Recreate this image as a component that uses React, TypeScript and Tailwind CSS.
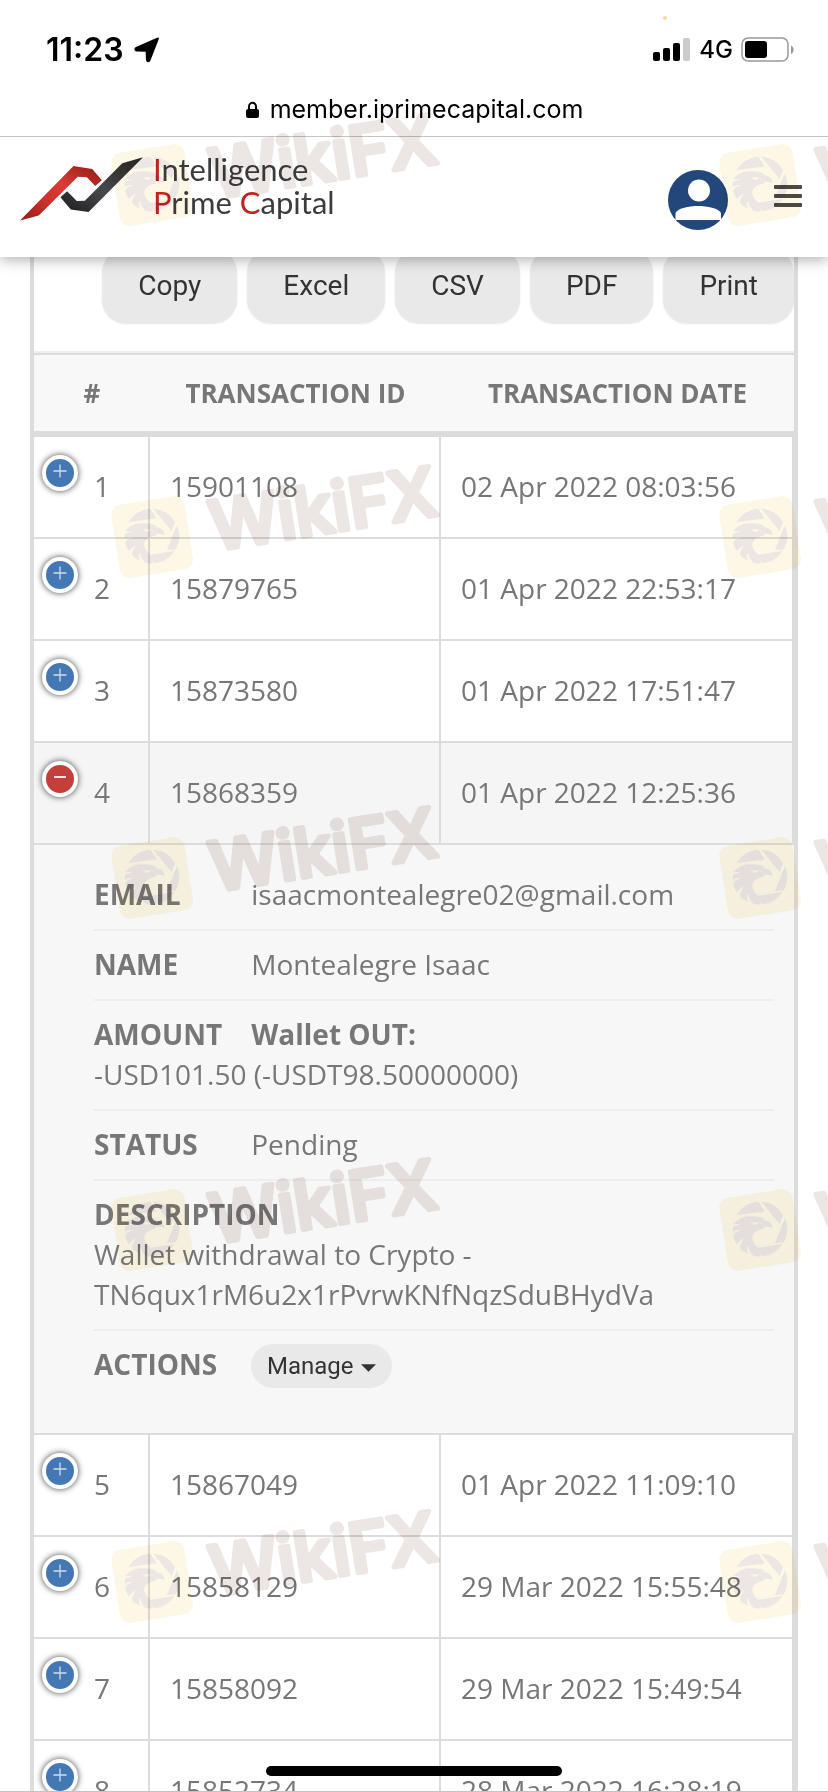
import { Fragment, useState } from "react";

type Transaction = {
  id: string;
  date: string;
};

const transactions: Transaction[] = [
  { id: "15901108", date: "02 Apr 2022 08:03:56" },
  { id: "15879765", date: "01 Apr 2022 22:53:17" },
  { id: "15873580", date: "01 Apr 2022 17:51:47" },
  { id: "15868359", date: "01 Apr 2022 12:25:36" },
  { id: "15867049", date: "01 Apr 2022 11:09:10" },
  { id: "15858129", date: "29 Mar 2022 15:55:48" },
  { id: "15858092", date: "29 Mar 2022 15:49:54" },
  { id: "15852734", date: "28 Mar 2022 16:28:19" },
];

const exportButtons = ["Copy", "Excel", "CSV", "PDF", "Print"];

const StatusBar = () => (
  <div className="flex h-[84px] items-center justify-between pl-[46px] pr-[33px] pt-4 font-['Inter',sans-serif] text-black">
    <div className="flex items-center gap-[10px]">
      <span className="text-[32px] font-semibold">11:23</span>
      <svg width="26" height="26" viewBox="0 0 26 26">
        <path
          d="M24 1.5 15.5 23.2c-.5 1.4-2.4 1.2-2.5-.3L12.6 13.8 2.7 13.4c-1.6-.1-1.8-2-.4-2.6Z"
          stroke="#000"
          strokeWidth="2"
          strokeLinejoin="round"
        />
      </svg>
    </div>
    <div className="flex items-center gap-2">
      <svg width="38" height="24" viewBox="0 0 38 24">
        <rect x="0" y="14" width="7" height="9" rx="2" />
        <rect x="10" y="10" width="7" height="13" rx="2" />
        <rect x="20" y="5" width="7" height="18" rx="2" />
        <rect x="30" y="0" width="7" height="23" rx="2" fill="#cbcbcb" />
      </svg>
      <span className="text-[24px] font-medium">4G</span>
      <svg width="54" height="26" viewBox="0 0 54 26">
        <rect x="1" y="1" width="46" height="23" rx="6" fill="none" stroke="#999" strokeWidth="1.5" />
        <rect x="4" y="4" width="22" height="17" rx="3" />
        <path d="M50 8.5c3.5 1.5 3.5 7 0 8.5Z" fill="#999" />
      </svg>
    </div>
  </div>
);

const AddressBar = () => (
  <div className="relative z-20 flex h-[53px] items-start justify-center gap-[10px] border-b border-[#c4c4c4] bg-white pt-[5px] font-['Inter',sans-serif] text-black">
    <svg width="15" height="18" viewBox="0 0 15 18" className="mt-3">
      <rect x="1" y="8" width="13" height="9" rx="2" />
      <path d="M4 9V5.5a3.5 3.7 0 0 1 7 0V9" fill="none" stroke="#000" strokeWidth="2" />
    </svg>
    <span className="text-[25px] leading-[40px]">member.iprimecapital.com</span>
  </div>
);

const Logo = () => (
  <a href="#" className="flex items-start gap-[10px]">
    <svg width="123" height="64" viewBox="62 472 368 190" className="mt-1">
      <defs>
        <linearGradient id="logoRed" x1="0" y1="1" x2="1" y2="0">
          <stop offset="0" stopColor="#8f1d17" />
          <stop offset="0.3" stopColor="#c9302a" />
          <stop offset="0.6" stopColor="#dc3b33" />
          <stop offset="1" stopColor="#8c1a14" />
        </linearGradient>
        <linearGradient id="logoDark" x1="0" y1="1" x2="1" y2="0">
          <stop offset="0" stopColor="#1d1d1f" />
          <stop offset="0.45" stopColor="#47484c" />
          <stop offset="1" stopColor="#262523" />
        </linearGradient>
      </defs>
      <path d="M62 661 222 498 278 507 307 541 287 558 262 532 235 530 118 646Z" fill="url(#logoRed)" />
      <path d="M183 592 203 574 232 603 256 602 368 490 430 472 267 636 214 628Z" fill="url(#logoDark)" />
    </svg>
    <span className="font-['Lato',sans-serif] text-[31px] leading-[33px] text-[#3c3c3e]">
      <span className="text-[#c0241f]">I</span>ntelligence
      <br />
      <span className="text-[#c0241f]">P</span>rime <span className="text-[#c0241f]">C</span>apital
    </span>
  </a>
);

const Header = () => (
  <header className="relative z-10 flex h-[120px] shrink-0 items-start justify-between bg-white pl-5 pr-[26px] pt-4 shadow-[0_2px_14px_rgba(0,0,0,0.35)]">
    <Logo />
    <div className="flex items-center gap-[46px] pt-[17px]">
      <button aria-label="Account">
        <svg width="60" height="60" viewBox="0 0 60 60">
          <circle cx="30" cy="30" r="30" fill="#22477a" />
          <circle cx="31" cy="20.5" r="11" fill="#fff" />
          <path d="M7.5 50V43c3-5 13-7 22.5-7s20 2 23 7v7Z" fill="#fff" />
        </svg>
      </button>
      <button aria-label="Menu" className="-mt-2">
        <svg width="28" height="24" viewBox="0 0 28 24" fill="#4c4a47">
          <rect y="1" width="28" height="4" rx="1" />
          <rect y="10" width="28" height="4" rx="1" />
          <rect y="19" width="28" height="4" rx="1" />
        </svg>
      </button>
    </div>
  </header>
);

const DetailLabel = ({ children }: { children: string }) => (
  <span className="inline-block min-w-[150px] font-bold">{children}</span>
);

const Details = () => (
  <ul className="ml-[60px] mr-5 divide-y-2 divide-[#eee] pb-[30px] pt-4 leading-[40px] *:pb-[15px] *:pt-[13px]">
    <li>
      <DetailLabel>EMAIL</DetailLabel> isaacmontealegre02@gmail.com
    </li>
    <li>
      <DetailLabel>NAME</DetailLabel> Montealegre Isaac
    </li>
    <li>
      <DetailLabel>AMOUNT</DetailLabel> <b>Wallet OUT:</b>
      <br />
      -USD101.50 (-USDT98.50000000)
    </li>
    <li>
      <DetailLabel>STATUS</DetailLabel> Pending
    </li>
    <li>
      <DetailLabel>DESCRIPTION</DetailLabel>
      <br />
      Wallet withdrawal to Crypto -
      <br />
      TN6qux1rM6u2x1rPvrwKNfNqzSduBHydVa
    </li>
    <li className="flex gap-[7px]">
      <DetailLabel>ACTIONS</DetailLabel>
      <button className="flex h-11 items-center gap-[7px] rounded-full bg-[#e9e9e9] px-4 font-['Roboto',sans-serif] text-2xl text-[#333]">
        Manage
        <svg width="15" height="8" viewBox="0 0 16 8" className="mt-1" fill="#333">
          <path d="M0 0H16L8 8Z" />
        </svg>
      </button>
    </li>
  </ul>
);

const WatermarkUnit = ({ x, y }: { x: number; y: number }) => (
  <g transform={`translate(${x} ${y})`}>
    <rect x="-37" y="-36" width="74" height="74" rx="10" fill="#fdf7e6" transform="rotate(-9)" />
    <g transform="scale(0.333)" fill="#ece6e4">
      <path d="M-70-42A82 82 0 0 1-5-82L14-53Z" />
      <path d="M4-82A82 82 0 0 1 69-42L59-15Z" />
      <path d="M75-32A82 82 0 0 1 72 40L45 42Z" />
      <path d="M-8 57 68 45A82 82 0 0 1 6 82Z" />
      <path d="M-81-14C-76-22-66-30-54-34-42-40-8-40 8-33 12-31 13-29 13-26 30-25 39-14 37-2 30-8 20-6 14-7 10-6 12-2 8 0-8 2-20 10-23 22-25 36-14 48-5 56L3 82C-6 83-14 82-20 80-28 72-34 62-36 48-40 58-40 66-36 74-46 70-54 65-60 58-60 46-54 36-46 28-56 32-64 38-69 46-76 36-80 26-81 18-74 10-66 6-56 4-66 2-74 4-82 8-82 2-82-2-81-6-74-10-66-12-56-12-66-16-74-16-81-14Z" />
      <path d="M-28-22C-22-17-10-22-4-20-8-11-20-10-28-22Z" fill="#fdf7e6" />
    </g>
    <text
      x="59"
      y="24"
      transform="rotate(-9)"
      fontSize="68"
      fontWeight="500"
      fill="#ece6e4"
      stroke="#ece6e4"
      strokeWidth="5"
      strokeLinejoin="round"
      className="font-['Inter',sans-serif]"
    >
      WikiFX
    </text>
  </g>
);

const Watermark = () => (
  <svg aria-hidden="true" className="pointer-events-none absolute inset-0 z-20 h-full w-full mix-blend-multiply">
    {[184, 536, 877, 1229, 1581].map((y) => (
      <Fragment key={y}>
        <WatermarkUnit x={152} y={y} />
        <WatermarkUnit x={760} y={y} />
      </Fragment>
    ))}
  </svg>
);

const App: React.FC = () => {
  const [openRow, setOpenRow] = useState<number | null>(3);

  return (
    <div className="relative flex h-screen flex-col overflow-hidden bg-white">
      <StatusBar />
      <AddressBar />
      <Header />

      <main className="-mt-2 min-h-0 flex-1 overflow-hidden px-[30px]">
        <div className="border-x-4 border-[#dcdcdc] font-['Open_Sans',sans-serif] text-[28px] text-[#777]">
          <div className="flex justify-end gap-[10px] overflow-hidden border-b-2 border-[#eee] pb-7">
            {exportButtons.map((label) => (
              <button
                key={label}
                className="h-[74px] rounded-3xl bg-[#e9e9e9] px-9 font-['Roboto',sans-serif] text-[28px] text-[#333] shadow-[0_1px_2px_rgba(0,0,0,0.1)]"
              >
                {label}
              </button>
            ))}
          </div>

          <table className="w-full table-fixed border-separate border-spacing-0">
            <thead>
              <tr className="h-[84px] bg-[#f8f8f8] text-[26px] *:border-b-6 *:border-t-2 *:border-[#dcdcdc] *:p-0">
                <th className="w-[116px]">#</th>
                <th className="w-[291px]">TRANSACTION ID</th>
                <th>TRANSACTION DATE</th>
              </tr>
            </thead>
            <tbody>
              {transactions.map((row, i) => {
                const open = openRow === i;
                return (
                  <Fragment key={row.id}>
                    <tr
                      className={`h-[102px] *:border-b-2 *:border-r-2 *:border-[#dcdcdc] *:p-0 ${open ? "bg-[#f5f5f5]" : "bg-white"}`}
                    >
                      <td>
                        <div className="flex h-[100px] gap-4 pl-2 pt-[18px]">
                          <button
                            onClick={() => setOpenRow(open ? null : i)}
                            aria-label={open ? "Hide details" : "Show details"}
                            className={`flex size-9 items-center justify-center rounded-full border-4 border-white pb-1 shadow-[0_0_6px_#444] ${open ? "bg-[#c33f39]" : "bg-[#4478b4]"}`}
                          >
                            <svg width="14" height="14" viewBox="0 0 14 14" stroke="#fff" fill="none">
                              {open ? (
                                <path d="M1 7H13" strokeWidth="2" strokeOpacity="0.85" />
                              ) : (
                                <path d="M.5 7H13.5M7 .5V13.5" strokeWidth="1.3" strokeOpacity="0.75" />
                              )}
                            </svg>
                          </button>
                          <span className="pt-[11px] leading-[40px]">{i + 1}</span>
                        </div>
                      </td>
                      <td>
                        <div className="h-[100px] pl-5 pt-[29px] leading-[40px]">{row.id}</div>
                      </td>
                      <td>
                        <div className="h-[100px] pl-5 pt-[29px] leading-[40px]">{row.date}</div>
                      </td>
                    </tr>
                    {open && (
                      <tr className="bg-[#f7f7f7]">
                        <td colSpan={3} className="border-b-2 border-[#dcdcdc] p-0">
                          <Details />
                        </td>
                      </tr>
                    )}
                  </Fragment>
                );
              })}
            </tbody>
          </table>
        </div>
      </main>

      <Watermark />

      {/* mic-in-use dot */}
      <span className="absolute right-[161px] top-4 size-1 rounded-full bg-[#fbd9a5]" />
      {/* home indicator */}
      <div className="absolute bottom-4 left-1/2 z-30 h-[10px] w-[296px] -translate-x-1/2 rounded-full bg-black" />
      <div className="absolute inset-x-0 bottom-0 h-px bg-[#c4c4c4]" />
    </div>
  );
};

export default App;
